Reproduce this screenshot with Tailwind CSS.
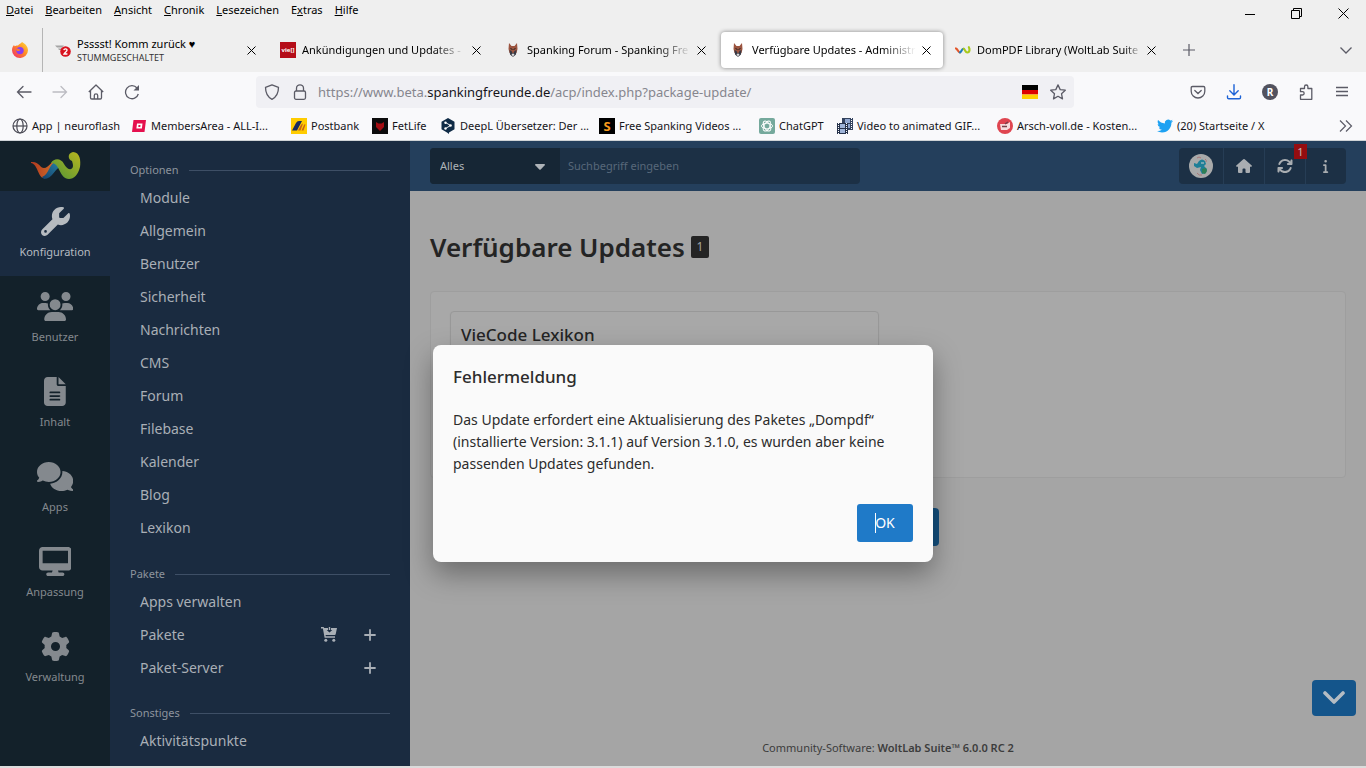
<!DOCTYPE html>
<html lang="de">
<head>
<meta charset="utf-8">
<title>Verfügbare Updates - Administration</title>
<script src="https://cdn.jsdelivr.net/npm/@tailwindcss/browser@4"></script>
</head>
<body class="flex min-h-screen flex-col bg-[#dcdcdc] font-['Noto_Sans',sans-serif] text-[#15141a]">

<!-- Browser window -->
<header class="border-b border-[#cfd3d6] bg-[#f9f9fb] text-xs">
  <div class="bg-[#efefef]">
    <div class="flex h-7 items-start justify-between">
      <nav aria-label="Menü" class="flex gap-3 pl-[6px] pt-[2px] text-[11px] leading-4 text-black">
        <button><u>D</u>atei</button>
        <button><u>B</u>earbeiten</button>
        <button><u>A</u>nsicht</button>
        <button><u>C</u>hronik</button>
        <button><u>L</u>esezeichen</button>
        <button>E<u>x</u>tras</button>
        <button><u>H</u>ilfe</button>
      </nav>
      <div class="flex items-center gap-9 pr-[17px] pt-2 text-black">
        <button aria-label="Minimieren"><svg class="size-[10px]" viewBox="0 0 10 10"><path d="M0 5.500h10" stroke="currentColor"/></svg></button>
        <button aria-label="Verkleinern"><svg class="size-[11px]" viewBox="0 0 11 11" fill="none" stroke="currentColor"><path d="M.5 2.500h8v8h-8zM2.500 2.500v-2h8v8h-2"/></svg></button>
        <button aria-label="Schließen"><svg class="size-[11px]" viewBox="0 0 11 11"><path d="M.5.5l10 10M10.500.5l-10 10" stroke="currentColor"/></svg></button>
      </div>
    </div>
    <div class="flex h-11 items-center">
      <button aria-label="Firefox View" class="flex h-11 w-[43px] shrink-0 items-center justify-center border-r border-[#b5b5b5] pr-[2px]">
        <svg class="size-4" viewBox="0 0 16 16"><defs><linearGradient id="ff" x1="1" y1="0" x2="0" y2="1"><stop offset="0" stop-color="#ffe23d"/><stop offset=".45" stop-color="#ff8a24"/><stop offset="1" stop-color="#f0246f"/></linearGradient></defs><path d="M10 0c3 1.500 6 4.500 6 8.300A7.800 7.800 0 0 1 8 16a7.900 7.900 0 0 1-8-8c0-2.300 1-4 2-5l.6 1.300C4 3.300 5 3.500 6 3.500 7 2 9 1.500 10 0z" fill="url(#ff)"/><circle cx="8" cy="8.600" r="3.700" fill="#8a3df0"/><path d="M4 6.500c2 0 3 .5 4.500 1.500-1 1.300-2.500 1-3.500 1z" fill="#ff7a2a"/></svg>
      </button>
      <div role="tablist" class="flex pl-[3px] text-[11px] text-black">
        <div class="w-[225px] pr-[3px]">
          <div role="tab" class="flex h-9 items-center gap-[6px] rounded pl-[9px] pr-3">
            <svg class="size-4 shrink-0" viewBox="0 0 16 16"><path d="M0 3.500h9l-2 2H2zM3 6.500h5l-1 1.500H4z" fill="#a4a4a4"/><circle cx="10.500" cy="9.500" r="5.300" fill="#d8131f"/><path d="M8.800 8.200c.3-2 3.500-1.700 3.200.2-.2 1.200-2.200 2.200-3 3.600h3.400" fill="none" stroke="#fff" stroke-width="1.300"/></svg>
            <div class="min-w-0 flex-1 whitespace-nowrap"><div class="leading-[14px]">Psssst! Komm zurück ♥</div><div class="text-[9px] leading-[13px] text-[#333]">STUMMGESCHALTET</div></div>
            <button aria-label="Tab schließen"><svg class="size-[9px]" viewBox="0 0 9 9"><path d="M.5.5l8 8M8.500.5l-8 8" stroke="currentColor"/></svg></button>
          </div>
        </div>
        <div class="w-[225px] pr-[3px]">
          <div role="tab" class="flex h-9 items-center gap-[6px] rounded pl-[9px] pr-3">
            <span class="grid size-4 shrink-0 place-items-center bg-[#b50d19] text-[6px] font-bold leading-none text-white">vie[]</span>
            <div class="min-w-0 flex-1 whitespace-nowrap mask-r-from-80%">Ankündigungen und Updates -</div>
            <button aria-label="Tab schließen"><svg class="size-[9px]" viewBox="0 0 9 9"><path d="M.5.5l8 8M8.500.5l-8 8" stroke="currentColor"/></svg></button>
          </div>
        </div>
        <div class="w-[225px] pr-[3px]">
          <div role="tab" class="flex h-9 items-center gap-[6px] rounded pl-[9px] pr-3">
            <svg class="size-4 shrink-0" viewBox="0 0 16 16"><path d="M4 1l2.500 3h3L12 1l.5 6-1 4h-7L3.500 7z" fill="#9c5540"/><path d="M4.500 8l2 1L8 12l1.500-3 2-1-.5 4.500L8 15l-3-2.500z" fill="#3a3a44"/><path d="M6.500 12h3L8 15z" fill="#ddd"/><path d="M5.500 6.500l2 1M10.500 6.500l-2 1" stroke="#222"/></svg>
            <div class="min-w-0 flex-1 whitespace-nowrap mask-r-from-80%">Spanking Forum - Spanking Fre</div>
            <button aria-label="Tab schließen"><svg class="size-[9px]" viewBox="0 0 9 9"><path d="M.5.5l8 8M8.500.5l-8 8" stroke="currentColor"/></svg></button>
          </div>
        </div>
        <div class="w-[225px] pr-[3px]">
          <div role="tab" aria-selected="true" class="flex h-9 items-center gap-[6px] rounded bg-white pl-[9px] pr-3 shadow-[0_0_4px_rgba(0,0,0,0.45)]">
            <svg class="size-4 shrink-0" viewBox="0 0 16 16"><path d="M4 1l2.500 3h3L12 1l.5 6-1 4h-7L3.500 7z" fill="#9c5540"/><path d="M4.500 8l2 1L8 12l1.500-3 2-1-.5 4.500L8 15l-3-2.500z" fill="#3a3a44"/><path d="M6.500 12h3L8 15z" fill="#ddd"/><path d="M5.500 6.500l2 1M10.500 6.500l-2 1" stroke="#222"/></svg>
            <div class="min-w-0 flex-1 whitespace-nowrap mask-r-from-80%">Verfügbare Updates - Administr</div>
            <button aria-label="Tab schließen"><svg class="size-[9px]" viewBox="0 0 9 9"><path d="M.5.5l8 8M8.500.5l-8 8" stroke="currentColor"/></svg></button>
          </div>
        </div>
        <div class="w-[225px] pr-[3px]">
          <div role="tab" class="flex h-9 items-center gap-[6px] rounded pl-[9px] pr-3">
            <svg class="size-4 shrink-0" viewBox="0 0 52 32" fill="none" stroke-width="7" stroke-linecap="round"><path d="M3 11c6 2 7 13 13 13" stroke="#e2572b"/><path d="M16 24c5-2 6-12 12-12" stroke="#1d7dbd"/><path d="M28 12c5 2 5 12 12 12 9 0 8-12 5-17" stroke="#a9c91c"/></svg>
            <div class="min-w-0 flex-1 whitespace-nowrap mask-r-from-90%">DomPDF Library (WoltLab Suite</div>
            <button aria-label="Tab schließen"><svg class="size-[9px]" viewBox="0 0 9 9"><path d="M.5.5l8 8M8.500.5l-8 8" stroke="currentColor"/></svg></button>
          </div>
        </div>
      </div>
      <button aria-label="Neuer Tab" class="ml-3 text-[#5b5b66]"><svg class="size-3" viewBox="0 0 12 12"><path d="M6 0v12M0 6h12" stroke="currentColor" stroke-width="1.200"/></svg></button>
      <button aria-label="Alle Tabs" class="ml-auto mr-[14px] text-[#5b5b66]"><svg class="h-[7px] w-3" viewBox="0 0 12 7" fill="none"><path d="M.5.5L6 6 11.500.5" stroke="currentColor" stroke-width="1.300"/></svg></button>
    </div>
  </div>

  <div class="flex h-10 items-center text-[#5b5b66]">
    <div class="flex w-64 shrink-0 items-center gap-5 pl-4">
      <button aria-label="Zurück"><svg class="size-4" viewBox="0 0 16 16" fill="none" stroke="currentColor" stroke-width="1.300" stroke-linecap="round"><path d="M15 8H1.500M7 2.500L1.500 8 7 13.500"/></svg></button>
      <button aria-label="Vor" class="text-[#bcbcc2]"><svg class="size-4" viewBox="0 0 16 16" fill="none" stroke="currentColor" stroke-width="1.300" stroke-linecap="round"><path d="M1 8h13.500M9 2.500L14.500 8 9 13.500"/></svg></button>
      <button aria-label="Startseite"><svg class="size-4" viewBox="0 0 16 16" fill="none" stroke="currentColor" stroke-width="1.300" stroke-linejoin="round"><path d="M.8 8L8 1l7.200 7M2.500 6.500v7.200q0 1.300 1.300 1.300h8.400q1.300 0 1.300-1.300V6.500M6.300 15v-3.500a1.700 1.700 0 0 1 3.400 0V15"/></svg></button>
      <button aria-label="Neu laden"><svg class="size-4" viewBox="0 0 16 16" fill="none" stroke="currentColor" stroke-width="1.300"><path d="M14.300 10A6.500 6.500 0 1 1 13 4"/><path d="M15 1v5.500H9.500z" fill="currentColor" stroke="none"/></svg></button>
    </div>
    <div class="flex h-8 w-[818px] items-center rounded bg-[#f0f0f4] pl-2 pr-2">
      <svg class="size-4 shrink-0" viewBox="0 0 16 16" fill="none" stroke="currentColor" stroke-width="1.300" stroke-linejoin="round"><path d="M8 .8l6.500 2.500c0 6-1.500 9.500-6.500 12-5-2.500-6.500-6-6.500-12z"/></svg>
      <svg class="ml-3 size-4 shrink-0" viewBox="0 0 16 16" fill="none" stroke="currentColor" stroke-width="1.300"><rect x="2.500" y="7" width="11" height="8.300" rx="1.500"/><path d="M4.500 7V4.300a3.500 3.500 0 0 1 7 0V7"/></svg>
      <a href="#" class="ml-[10px] whitespace-nowrap pt-px text-[13px] text-[#86868e]">https://www.beta.<span class="text-[#15141a]">spankingfreunde.de</span>/acp/index.php?package-update/</a>
      <svg class="ml-auto h-[14px] w-4 shrink-0" viewBox="0 0 16 14"><path fill="#000" d="M0 0h16v5H0z"/><path fill="#d00" d="M0 5h16v4.500H0z"/><path fill="#ffce00" d="M0 9.500h16V14H0z"/></svg>
      <button aria-label="Lesezeichen setzen" class="ml-3"><svg class="size-4" viewBox="0 0 16 16" fill="none" stroke="currentColor" stroke-width="1.300" stroke-linejoin="round"><path d="M8 .9l2.200 4.700 5.100.6-3.800 3.500 1 5.200L8 12.300l-4.500 2.600 1-5.200L.7 6.200l5.100-.6z"/></svg></button>
    </div>
    <div class="ml-auto flex items-center gap-5 pr-4">
      <button aria-label="Pocket"><svg class="size-4" viewBox="0 0 16 16" fill="none" stroke="currentColor" stroke-width="1.300" stroke-linecap="round"><path d="M2.500 2.500h11q1.300 0 1.300 1.300v3.400a6.800 6.800 0 0 1-13.600 0V3.800q0-1.300 1.300-1.300zM4.800 6.500L8 9.500l3.200-3"/></svg></button>
      <button aria-label="Downloads" class="text-[#1c62d6]"><svg class="size-4" viewBox="0 0 16 16" fill="none" stroke="currentColor" stroke-width="1.400" stroke-linecap="round"><path d="M8 .8v10M3.800 6.800L8 11l4.200-4.200M1.500 12v1.500q0 1.300 1.300 1.300h10.400q1.300 0 1.300-1.300V12"/></svg></button>
      <button aria-label="Konto" class="grid size-4 place-items-center rounded-full bg-[#52525e] text-[10px] font-bold leading-none text-white">R</button>
      <button aria-label="Erweiterungen"><svg class="size-4" viewBox="0 0 16 16" fill="none" stroke="currentColor" stroke-width="1.300" stroke-linejoin="round"><path d="M2.500 15.300V11h2a1.600 1.600 0 0 0 0-3.300h-2V4.500h4V2.700a1.700 1.700 0 0 1 3.400 0v1.800h3.900v10.800z"/></svg></button>
      <button aria-label="Anwendungsmenü"><svg class="size-4" viewBox="0 0 16 16" stroke="currentColor" stroke-width="1.300"><path d="M2 3.500h12M2 7.500h12M2 11.500h12"/></svg></button>
    </div>
  </div>

  <nav aria-label="Lesezeichen" class="flex h-7 items-center whitespace-nowrap pl-3 text-[11px] text-[#15141a]">
    <a href="#" class="flex w-[119px] shrink-0 items-center gap-1"><svg class="size-4" viewBox="0 0 16 16" fill="none" stroke="#4a4a55" stroke-width="1.200"><circle cx="8" cy="8" r="7"/><ellipse cx="8" cy="8" rx="3.200" ry="7"/><path d="M1 8h14"/></svg>App | neuroflash</a>
    <a href="#" class="flex w-[160px] shrink-0 items-center gap-1"><svg class="size-4" viewBox="0 0 16 16"><path d="M2.500 2H15l-1.500 12H1z" fill="#e5104e"/><path d="M6 5.500h5.500l-.6 5H5.400z" fill="#fff"/><path d="M7.500 7h2l-.2 2H7.300z" fill="#e5104e"/></svg>MembersArea - ALL-I...</a>
    <a href="#" class="flex w-[81px] shrink-0 items-center gap-1"><svg class="size-4" viewBox="0 0 16 16"><path fill="#fc0" d="M0 0h16v16H0z"/><path d="M1 12.500L5 5q1-2 3-2h3L6 12.500z" fill="#1a2b60"/><path d="M7 12.500L10 7q.7-1.500 2-1.500L9.500 12.500zM10.500 12.500L13 7q.5-1 1.500-.5l-2 6z" fill="#c9601a"/></svg>Postbank</a>
    <a href="#" class="flex w-[68px] shrink-0 items-center gap-1"><svg class="size-4" viewBox="0 0 16 16"><path fill="#0c0c0c" d="M0 0h16v16H0z"/><path d="M4 4l2.500 1.500h3L12 4v5l-4 4-4-4z" fill="#a30d12"/></svg>FetLife</a>
    <a href="#" class="flex w-[159px] shrink-0 items-center gap-1"><svg class="size-4" viewBox="0 0 16 16"><path d="M8 0l6.500 3.700v7.500L9 14.500V16l-2-1.500-5.500-3.300V3.700z" fill="#0f2b46"/><path d="M5.500 4.500L10.500 7.500l-5 3" stroke="#fff" stroke-width=".9" fill="none"/><g fill="#fff"><circle cx="5.500" cy="4.700" r="1.200"/><circle cx="10.500" cy="7.500" r="1.300"/><circle cx="5.500" cy="10.500" r="1.200"/></g></svg>DeepL Übersetzer: Der ...</a>
    <a href="#" class="flex w-[160px] shrink-0 items-center gap-1"><span class="grid size-4 place-items-center bg-black text-[13px] font-bold leading-none text-[#f79a1c]">S</span>Free Spanking Videos ...</a>
    <a href="#" class="flex w-[78px] shrink-0 items-center gap-1"><svg class="size-4" viewBox="0 0 16 16"><rect width="16" height="16" rx="2" fill="#75a99c"/><g fill="none" stroke="#fff" stroke-width=".9"><ellipse cx="8" cy="8" rx="5.500" ry="2.800"/><ellipse cx="8" cy="8" rx="5.500" ry="2.800" transform="rotate(60 8 8)"/><ellipse cx="8" cy="8" rx="5.500" ry="2.800" transform="rotate(120 8 8)"/></g></svg>ChatGPT</a>
    <a href="#" class="flex w-[160px] shrink-0 items-center gap-1"><svg class="size-4" viewBox="0 0 16 16"><path fill="#34435e" d="M5 0h11v12H5z"/><path fill="#8fa6cf" d="M8 1h5v4H8zM8 6h5v4H8z"/><path fill="#26324a" d="M0 5h11v11H0z"/><path fill="#9fb4d8" d="M3 6h5v4H3zM3 11h5v4H3z"/><path d="M1.500 5v11M9.500 5v11M14.500 0v12" stroke="#fff" stroke-dasharray="1 1"/></svg>Video to animated GIF...</a>
    <a href="#" class="flex w-[160px] shrink-0 items-center gap-1"><svg class="size-4" viewBox="0 0 16 16"><circle cx="8" cy="8" r="8" fill="#df4550"/><path d="M3 6h7l3-2v6l-3 2H4z" fill="#f6dede"/><path d="M5 8.500h5M8 6l3-2" stroke="#76434a" stroke-width="1.500"/></svg>Arsch-voll.de - Kosten...</a>
    <a href="#" class="flex shrink-0 items-center gap-1"><svg class="size-4" viewBox="0 0 24 24"><path fill="#1da1f2" d="M23.950 4.570a10 10 0 0 1-2.820.77 4.960 4.960 0 0 0 2.160-2.720c-.95.550-2 .960-3.130 1.180a4.920 4.920 0 0 0-8.380 4.480C7.690 8.090 4.070 6.130 1.640 3.160a4.820 4.820 0 0 0-.67 2.480c0 1.700.87 3.210 2.190 4.100a4.900 4.900 0 0 1-2.230-.62v.06a4.920 4.920 0 0 0 3.950 4.830 5 5 0 0 1-2.210.08 4.940 4.940 0 0 0 4.600 3.420A9.870 9.870 0 0 1 0 19.540a14 14 0 0 0 7.550 2.210c9.050 0 14-7.500 14-13.980l-.02-.64a10 10 0 0 0 2.460-2.550z"/></svg>(20) Startseite / X</a>
    <button aria-label="Weitere Lesezeichen" class="ml-auto mr-[13px] text-[#5b5b66]"><svg class="h-3 w-[14px]" viewBox="0 0 14 12" fill="none" stroke="currentColor" stroke-width="1.200"><path d="M1 .5L6.500 6 1 11.500M7 .5L12.500 6 7 11.500"/></svg></button>
  </nav>
</header>

<!-- Administration -->
<div class="relative mb-[2px] flex flex-1 bg-[#a5a5a5]">
  <nav aria-label="Hauptmenü" class="w-[110px] shrink-0 bg-[#13212a] text-[11px] text-[#84898e]">
    <a href="#" aria-label="WoltLab" class="flex h-[50px] items-center justify-center">
      <svg class="h-8 w-[52px]" viewBox="0 0 52 32"><defs><linearGradient id="wa"><stop offset="0" stop-color="#b3381f"/><stop offset="1" stop-color="#d27a2c"/></linearGradient><linearGradient id="wb" x1="0" y1="1" x2="1" y2="0"><stop offset="0" stop-color="#15406b"/><stop offset="1" stop-color="#2683a5"/></linearGradient><linearGradient id="wc" x1="0" y1="1" x2="1" y2="0"><stop offset="0" stop-color="#4d9437"/><stop offset="1" stop-color="#b9b61f"/></linearGradient></defs><path d="M2 12c8-1 9 6 13 6 5 0 8-9 15-8l-3 4c-5 1-6 14-12 14C9 28 9 14 2 13z" fill="url(#wa)"/><path d="M27 12c3 0 5 2 5 5-5-1-8 12-17 12l-2-2c7-2 7-14 14-15z" fill="url(#wb)"/><path d="M22 13c3-5 10-5 13 1 2 3 4 6 7 5 3-1 2-5 1-8-4-1-5-8 1-9 7 0 8 9 7 15-2 8-6 12-11 12-10 0-9-17-18-16z" fill="url(#wc)"/></svg>
    </a>
    <a href="#" class="flex h-[85px] flex-col items-center gap-[6px] bg-[#1a2b40] pt-4 leading-5 text-[#b6bbc0]"><svg class="h-[29px]" viewBox="0 0 512 512" fill="currentColor"><path d="M352 320c88.400 0 160-71.600 160-160c0-15.300-2.200-30.100-6.200-44.200c-3.100-10.800-16.400-13.200-24.300-5.300l-76.800 76.800c-3 3-7.100 4.700-11.300 4.700H336c-8.800 0-16-7.200-16-16V118.600c0-4.200 1.700-8.300 4.700-11.300l76.800-76.800c7.900-7.900 5.400-21.200-5.300-24.300C382.100 2.200 367.300 0 352 0C263.600 0 192 71.600 192 160c0 19.100 3.400 37.500 9.500 54.500L19.900 396.100C7.200 408.800 0 426.100 0 444.100C0 481.600 30.400 512 67.900 512c18 0 35.300-7.200 48-19.900L297.500 310.500c17 6.200 35.400 9.500 54.500 9.500zM80 408a24 24 0 1 1 0 48 24 24 0 1 1 0-48z"/></svg>Konfiguration</a>
    <a href="#" class="flex h-[85px] flex-col items-center gap-[6px] pt-4 leading-5"><svg class="h-[29px]" viewBox="0 0 640 512" fill="currentColor"><path d="M144 0a80 80 0 1 1 0 160A80 80 0 1 1 144 0zM512 0a80 80 0 1 1 0 160A80 80 0 1 1 512 0zM0 298.700C0 239.800 47.800 192 106.700 192h42.700c15.900 0 31 3.500 44.600 9.700c-1.300 7.200-1.900 14.700-1.900 22.300c0 38.200 16.800 72.500 43.300 96c-.2 0-.4 0-.7 0H21.300C9.600 320 0 310.400 0 298.700zM405.300 320c-.2 0-.4 0-.7 0c26.600-23.500 43.300-57.800 43.300-96c0-7.600-.7-15-1.900-22.300c13.600-6.300 28.700-9.700 44.600-9.700h42.700C592.200 192 640 239.800 640 298.700c0 11.800-9.600 21.300-21.300 21.300H405.300zM224 224a96 96 0 1 1 192 0 96 96 0 1 1 -192 0zM128 485.300C128 411.700 187.700 352 261.300 352H378.700C452.300 352 512 411.700 512 485.300c0 14.700-11.900 26.700-26.700 26.700H154.700c-14.700 0-26.700-11.900-26.700-26.700z"/></svg>Benutzer</a>
    <a href="#" class="flex h-[85px] flex-col items-center gap-[6px] pt-4 leading-5"><svg class="h-[29px]" viewBox="0 0 384 512" fill="currentColor"><path d="M64 0C28.700 0 0 28.700 0 64V448c0 35.300 28.700 64 64 64H320c35.300 0 64-28.700 64-64V160H256c-17.700 0-32-14.300-32-32V0H64zM256 0V128H384L256 0zM112 256H272c8.800 0 16 7.200 16 16s-7.200 16-16 16H112c-8.800 0-16-7.200-16-16s7.200-16 16-16zm0 64H272c8.800 0 16 7.200 16 16s-7.200 16-16 16H112c-8.800 0-16-7.200-16-16s7.200-16 16-16zm0 64H272c8.800 0 16 7.200 16 16s-7.200 16-16 16H112c-8.800 0-16-7.200-16-16s7.200-16 16-16z"/></svg>Inhalt</a>
    <a href="#" class="flex h-[85px] flex-col items-center gap-[6px] pt-4 leading-5"><svg class="h-[29px]" viewBox="0 0 640 512" fill="currentColor"><path d="M208 352c114.900 0 208-78.800 208-176S322.900 0 208 0S0 78.800 0 176c0 38.600 14.700 74.300 39.600 103.400c-3.500 9.400-8.700 17.700-14.200 24.700c-4.800 6.200-9.700 11-13.300 14.300c-1.800 1.600-3.300 2.900-4.300 3.700c-.5 .4-.9 .7-1.100 .8l-.2 .2C1 327.200-1.400 334.400 .8 340.900S9.100 352 16 352c21.800 0 43.800-5.600 62.100-12.500c9.200-3.500 17.800-7.400 25.200-11.400C134.100 343.300 169.800 352 208 352zM448 176c0 112.300-99.100 196.900-216.500 207C255.800 457.400 336.400 512 432 512c38.200 0 73.900-8.700 104.700-23.900c7.500 4 16 7.900 25.200 11.400c18.300 6.900 40.300 12.500 62.100 12.500c6.900 0 13.100-4.500 15.200-11.100c2.100-6.600-.2-13.800-5.800-17.900l-.2-.2c-.2-.2-.6-.4-1.100-.8c-1-.8-2.500-2-4.300-3.700c-3.600-3.300-8.500-8.100-13.300-14.300c-5.500-7-10.700-15.400-14.200-24.700c24.900-29 39.600-64.700 39.600-103.400c0-92.800-84.900-168.900-192.600-175.500c.4 5.100 .6 10.300 .6 15.500z"/></svg>Apps</a>
    <a href="#" class="flex h-[85px] flex-col items-center gap-[6px] pt-4 leading-5"><svg class="h-[29px]" viewBox="0 0 576 512" fill="currentColor"><path d="M64 0C28.700 0 0 28.700 0 64V352c0 35.300 28.700 64 64 64H240l-10.700 32H160c-17.700 0-32 14.300-32 32s14.300 32 32 32H416c17.700 0 32-14.300 32-32s-14.300-32-32-32H346.700L336 416H512c35.300 0 64-28.700 64-64V64c0-35.300-28.700-64-64-64H64zM512 64V288H64V64H512z"/></svg>Anpassung</a>
    <a href="#" class="flex h-[85px] flex-col items-center gap-[6px] pt-4 leading-5"><svg class="h-[29px]" viewBox="0 0 512 512" fill="currentColor"><path d="M495.900 166.600c3.200 8.700 .5 18.400-6.400 24.600l-43.300 39.400c1.100 8.300 1.700 16.800 1.700 25.400s-.6 17.100-1.700 25.400l43.300 39.400c6.900 6.200 9.600 15.900 6.400 24.600c-4.400 11.900-9.700 23.300-15.800 34.300l-4.700 8.100c-6.600 11-14 21.400-22.100 31.200c-5.900 7.200-15.700 9.600-24.500 6.800l-55.700-17.700c-13.400 10.300-28.200 18.900-44 25.400l-12.500 57.100c-2 9.100-9 16.300-18.200 17.800c-13.800 2.300-28 3.500-42.500 3.500s-28.700-1.200-42.500-3.500c-9.200-1.500-16.200-8.700-18.200-17.800l-12.500-57.100c-15.800-6.500-30.600-15.100-44-25.400L83.100 425.900c-8.800 2.800-18.600 .3-24.500-6.800c-8.100-9.800-15.500-20.200-22.100-31.200l-4.700-8.100c-6.100-11-11.400-22.400-15.800-34.300c-3.200-8.700-.5-18.400 6.400-24.600l43.300-39.400C64.600 273.100 64 264.600 64 256s.6-17.100 1.700-25.400L22.400 191.200c-6.900-6.200-9.600-15.900-6.400-24.600c4.400-11.900 9.700-23.300 15.800-34.300l4.700-8.100c6.600-11 14-21.400 22.100-31.200c5.900-7.200 15.700-9.600 24.500-6.800l55.700 17.700c13.400-10.300 28.200-18.900 44-25.400l12.500-57.100c2-9.100 9-16.300 18.200-17.800C227.300 1.200 241.500 0 256 0s28.700 1.200 42.500 3.500c9.200 1.500 16.200 8.700 18.200 17.800l12.500 57.100c15.800 6.500 30.600 15.100 44 25.400l55.700-17.700c8.800-2.800 18.600-.3 24.500 6.800c8.100 9.800 15.500 20.200 22.100 31.200l4.700 8.100c6.100 11 11.400 22.400 15.800 34.300zM256 336a80 80 0 1 0 0-160 80 80 0 1 0 0 160z"/></svg>Verwaltung</a>
  </nav>

  <nav aria-label="Konfiguration" class="flex w-[300px] shrink-0 flex-col gap-[18px] bg-[#1a2b40] px-5 pt-[18px] text-sm text-[#a9afb6]">
    <section>
      <h2 class="flex h-[22px] items-center gap-[10px] text-[11px] text-[#8d949d] after:h-px after:flex-1 after:bg-[#3e4f66]">Optionen</h2>
      <ul class="pb-px pl-[10px] leading-[33px]">
        <li><a href="#">Module</a></li>
        <li><a href="#">Allgemein</a></li>
        <li><a href="#">Benutzer</a></li>
        <li><a href="#">Sicherheit</a></li>
        <li><a href="#">Nachrichten</a></li>
        <li><a href="#">CMS</a></li>
        <li><a href="#">Forum</a></li>
        <li><a href="#">Filebase</a></li>
        <li><a href="#">Kalender</a></li>
        <li><a href="#">Blog</a></li>
        <li><a href="#">Lexikon</a></li>
      </ul>
    </section>
    <section>
      <h2 class="flex h-[22px] items-center gap-[10px] text-[11px] text-[#8d949d] after:h-px after:flex-1 after:bg-[#3e4f66]">Pakete</h2>
      <ul class="pl-[10px] pr-[14px] leading-[33px]">
        <li><a href="#">Apps verwalten</a></li>
        <li class="flex items-center"><a href="#">Pakete</a>
          <a href="#" aria-label="Paket kaufen" class="ml-auto"><svg class="h-[15px] w-4" viewBox="0 0 16 15" fill="currentColor"><path d="M0 0h2.300q.7 0 .8.700L3.200 1H7v2H5.700L8.500 5.600 11.300 3H10V1h6l-1.300 6.200q-.2.800-1 .8H4.600l.2 1.200H14v1.500H3.600L1.900 1.500H0z"/><path d="M7.800 0h1.400v3H7.800z"/><circle cx="4.800" cy="13.200" r="1.500"/><circle cx="12.800" cy="13.200" r="1.500"/></svg></a>
          <a href="#" aria-label="Paket hinzufügen" class="ml-[27px]"><svg class="size-3" viewBox="0 0 12 12"><path d="M6 1v10M1 6h10" stroke="currentColor" stroke-width="1.800" stroke-linecap="round"/></svg></a></li>
        <li class="flex items-center"><a href="#">Paket-Server</a>
          <a href="#" aria-label="Server hinzufügen" class="ml-auto"><svg class="size-3" viewBox="0 0 12 12"><path d="M6 1v10M1 6h10" stroke="currentColor" stroke-width="1.800" stroke-linecap="round"/></svg></a></li>
      </ul>
    </section>
    <section>
      <h2 class="flex h-[22px] items-center gap-[10px] text-[11px] text-[#8d949d] after:h-px after:flex-1 after:bg-[#3e4f66]">Sonstiges</h2>
      <ul class="pl-[10px] leading-[33px]"><li><a href="#">Aktivitätspunkte</a></li></ul>
    </section>
  </nav>

  <div class="flex min-w-0 flex-1 flex-col">
    <div class="flex h-[50px] items-center justify-between bg-[#243f5c] px-5">
      <form class="flex h-9 w-[430px] overflow-hidden rounded bg-[#1c3045] text-[11px]">
        <div class="relative w-[130px]">
          <select aria-label="Suchbereich" class="h-9 w-full appearance-none bg-[#162635] pl-[10px] text-[#aeb3b8]"><option>Alles</option></select>
          <svg class="pointer-events-none absolute right-[15px] top-4 h-[6px] w-[10px]" viewBox="0 0 10 6" fill="#aeb3b8"><path d="M.7 0h8.600q1 .4.400 1.200L5.700 5.500q-.7.700-1.400 0L.3 1.200Q-.3.400.7 0z"/></svg>
        </div>
        <input type="text" aria-label="Suche" placeholder="Suchbegriff eingeben" class="min-w-0 flex-1 bg-transparent px-2 text-[#aeb3b8] placeholder:text-[#58687a]">
      </form>
      <div class="flex h-9 divide-x divide-[#263d55] rounded bg-[#1c3045] text-[#a9adb1]">
        <a href="#" aria-label="Benutzerkonto" class="grid w-[45px] place-items-center"><svg class="size-6" viewBox="0 0 24 24"><circle cx="12" cy="12" r="12" fill="#a9aaaa"/><path d="M8 4q2-2 4 0M16 5q2 1 1 3M8 19q2 3 5 2" stroke="#a77" fill="none"/><path d="M10 7q3-3 6 0l1 3-2 2 3 3-1 4-4 1-2-4 1-3-4 1-3-2V9l3 1z" fill="#1f7f97"/><path d="M13 15l4-1 1 3-2 3-3-1z" fill="#2f7f55"/><path d="M12 9h3" stroke="#ccc"/></svg></a>
        <a href="#" aria-label="Startseite" class="grid w-[41px] place-items-center"><svg class="h-[14px] w-4" viewBox="0 0 16 14" fill="currentColor"><path d="M8 0q.4 0 .7.300l7 6.100q.7.900-.3 1.300H14V13q0 1-1 1h-2.500q-1 0-1-1v-2.500q0-1-1-1h-1q-1 0-1 1V13q0 1-1 1H3q-1 0-1-1V7.700H.6q-1-.4-.3-1.300l7-6.100Q7.600 0 8 0z"/></svg></a>
        <a href="#" aria-label="Updates" class="relative grid w-[41px] place-items-center"><svg class="size-4" viewBox="0 0 512 512" fill="currentColor"><path d="M105.100 202.600c7.700-21.800 20.200-42.300 37.800-59.800c62.500-62.500 163.800-62.500 226.300 0L386.300 160H352c-17.700 0-32 14.300-32 32s14.300 32 32 32H463.500c17.700 0 32-14.300 32-32V80c0-17.700-14.300-32-32-32s-32 14.300-32 32v35.200L414.400 97.600c-87.500-87.500-229.300-87.500-316.800 0C73.200 122 55.600 150.700 44.800 181.400c-5.900 16.700 2.900 34.900 19.500 40.800s34.900-2.900 40.800-19.500zM39 289.300c-5 1.500-9.800 4.200-13.700 8.200c-4 4-6.700 8.800-8.100 14c-.3 1.200-.6 2.500-.8 3.800c-.3 1.700-.4 3.400-.4 5.100V432c0 17.700 14.300 32 32 32s32-14.300 32-32V396.900l17.600 17.500c87.500 87.400 229.300 87.400 316.700 0c24.400-24.400 42.100-53.100 52.900-83.700c5.900-16.700-2.900-34.900-19.500-40.800s-34.900 2.900-40.800 19.500c-7.700 21.800-20.200 42.300-37.800 59.800c-62.500 62.500-163.800 62.500-226.300 0l-.1-.1L125.600 352H160c17.700 0 32-14.300 32-32s-14.300-32-32-32H48.400c-1.600 0-3.200 .1-4.800 .3s-3.100 .5-4.600 1z"/></svg><span class="absolute -top-1 left-[29px] grid h-[15px] w-[13px] place-items-center bg-[#950d10] text-[11px] leading-none text-[#c9b5b5]">1</span></a>
        <a href="#" aria-label="Information" class="grid w-10 place-items-center"><svg class="h-[14px]" viewBox="0 0 192 512" fill="currentColor"><path d="M48 80a48 48 0 1 1 96 0A48 48 0 1 1 48 80zM0 224c0-17.700 14.300-32 32-32H96c17.700 0 32 14.300 32 32V448h32c17.700 0 32 14.300 32 32s-14.300 32-32 32H32c-17.700 0-32-14.300-32-32s14.300-32 32-32H64V256H32c-17.700 0-32-14.300-32-32z"/></svg></a>
      </div>
    </div>

    <main class="flex flex-1 flex-col px-5 pt-[38px] text-[#242424]">
      <h1 class="flex items-center gap-[6px] text-[26px] font-semibold leading-9">Verfügbare Updates <span class="grid h-[22px] w-[18px] place-items-center rounded-xs bg-[#242424] text-xs font-normal text-[#a5a5a5]">1</span></h1>
      <section class="mt-[26px] h-[187px] rounded border border-[#9e9e9e] bg-[#a8a8a8] p-[19px]">
        <article class="h-[146px] w-[429px] rounded-sm border border-[#989898] px-[10px] py-[11px] shadow-xs"><h2 class="text-[17px] font-medium leading-6">VieCode Lexikon</h2></article>
      </section>
      <button aria-label="Update starten" class="mx-auto mt-[30px] h-[38px] w-[102px] rounded bg-[#14507f]"></button>
      <footer class="mb-2 mt-auto text-center text-[11px] leading-5 text-[#3c3c3c]">Community-Software: <a href="#" class="font-semibold">WoltLab Suite™ 6.0.0 RC 2</a></footer>
    </main>
  </div>

  <div class="absolute inset-0 flex items-center justify-center">
    <div role="alertdialog" aria-labelledby="dialog-title" class="w-[500px] rounded-lg bg-[#fafafa] p-5 text-[#2c2c2c] shadow-[0_12px_28px_rgba(0,0,0,0.35)]">
      <h2 id="dialog-title" class="text-[17px] font-medium leading-6">Fehlermeldung</h2>
      <p class="mt-5 text-sm leading-[22px]">Das Update erfordert eine Aktualisierung des Paketes „Dompdf“<br>(installierte Version: 3.1.1) auf Version 3.1.0, es wurden aber keine<br>passenden Updates gefunden.</p>
      <div class="mt-[29px] flex justify-end">
        <button class="relative h-[38px] w-14 rounded-[3px] bg-[#1f7ac8] text-sm text-white">OK<span class="absolute left-[18px] top-[9px] h-5 w-px bg-white"></span></button>
      </div>
    </div>
  </div>
  <button aria-label="Nach unten" class="absolute bottom-[50px] right-[10px] grid h-9 w-11 place-items-center rounded bg-[#14558b] text-[#b4bcc3]"><svg class="h-[14px] w-[22px]" viewBox="0 0 22 14" fill="none"><path d="M2 2l9 9 9-9" stroke="currentColor" stroke-width="3.600" stroke-linecap="round" stroke-linejoin="round"/></svg></button>
</div>
</body>
</html>
